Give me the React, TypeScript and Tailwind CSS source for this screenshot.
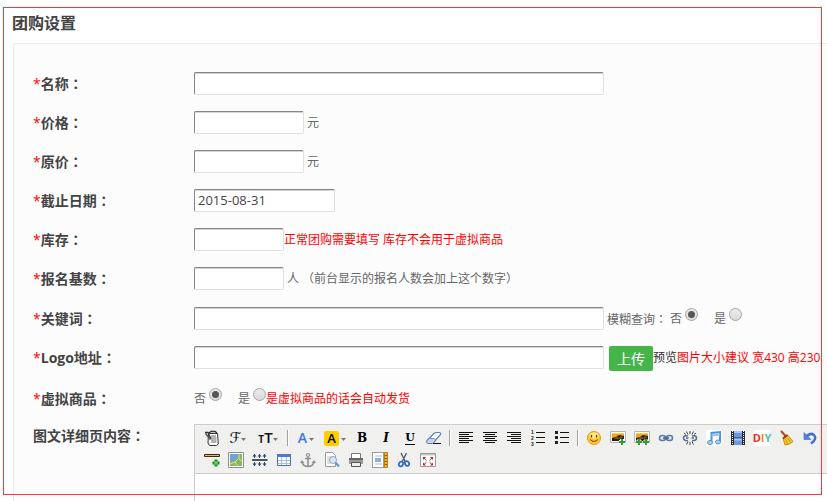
import React, { useState } from "react";

type RowProps = {
    label: string;
    htmlFor?: string;
    required?: boolean;
    className?: string;
    children: React.ReactNode;
};

const INPUT = "h-[23px] shrink-0 rounded-[2px] border border-[#e0e0e0] border-t-[#858585] border-l-[#858585] bg-white px-[3px] text-[13px] text-[#444] inset-shadow-[0_1px_0_#d4d4d4] focus:outline-none";

// the TC face keeps the full-width colon centred in its cell
function Colon() {
    return <span className="font-['Noto_Sans_CJK_TC',sans-serif]">：</span>;
}

function Row({ label, htmlFor, required = true, className = "py-2", children }: RowProps) {
    return (
        <div className={`flex items-start leading-[23px] ${className}`}>
            <label htmlFor={htmlFor} className="h-[23px] w-[161px] shrink-0 text-sm leading-[23px] font-bold text-[#444]">
                {required && <span className="font-normal text-[#f00]">*</span>}
                {label}
                <Colon />
            </label>
            {children}
        </div>
    );
}

function Radio({ text, name, checked, onChange }: { text: string; name: string; checked: boolean; onChange: () => void }) {
    return (
        <label className="flex items-start gap-[3px]">
            {text}
            <input
                type="radio"
                name={name}
                checked={checked}
                onChange={onChange}
                className="mt-px flex size-[13px] shrink-0 appearance-none items-center justify-center rounded-full border border-[#a5a5a5] bg-linear-to-b from-[#ececec] to-[#dadada] checked:before:size-[7px] checked:before:rounded-full checked:before:bg-[#555] checked:before:content-['']"
            />
        </label>
    );
}

function Tool({ title, className = "w-6", children }: { title: string; className?: string; children: React.ReactNode }) {
    return (
        <button type="button" title={title} aria-label={title} className={`flex h-[22px] shrink-0 items-center justify-center ${className}`}>
            {children}
        </button>
    );
}

function Icon({ children }: { children: React.ReactNode }) {
    return (
        <svg viewBox="0 0 16 16" className="size-4" fill="none">
            {children}
        </svg>
    );
}

function Caret() {
    return (
        <svg viewBox="0 0 5 3" className="mt-0.5 h-[3px] w-[5px] shrink-0">
            <path d="M0 0h5L2.5 3z" fill="#777" />
        </svg>
    );
}

function Separator() {
    return <div className="mx-[3px] h-4 w-0.5 shrink-0 self-center border-l border-[#a0a0a0] bg-white" />;
}

function Picture() {
    return (
        <>
            <path d="M.5 1.5h15v11H.5z" fill="#fff" stroke="#b5b5b5" />
            <path d="M2 3h12v8H2z" fill="#2b1c10" />
            <path d="M2 3h12v3L9 5 6 7 2 8z" fill="#f9a11b" />
            <path d="M2 3h12v1H2z" fill="#fcd24a" />
            <path d="M4 9l3-3 2 2 2-2 2 1v1L9 9z" fill="#6b5a1e" />
        </>
    );
}

function Toolbar() {
    return (
        <div className="overflow-hidden border-b border-[#ccc] bg-[#f0f0ee] py-0.5 pl-[5px] text-black">
            <div className="flex">
                <Tool title="快速排版">
                    <Icon>
                        <path d="M4.5 3.5h9l.8 10.5-1.8 1.5h-7L4 13z" fill="#fff" stroke="#333" />
                        <path d="M5 3l2-1.5h4L13 3M1 2.5h3L7 9" stroke="#333" strokeWidth="1.3" />
                        <path d="M1.5 3.5L6.5 9.5" stroke="#555" strokeWidth="1.5" />
                        <path d="M7 6h5M7 8h5.5M7 10h5.5M7 12h5.5" stroke="#666" />
                    </Icon>
                </Tool>
                <Tool title="字体" className="w-7">
                    <span className="font-['DejaVu_Sans',sans-serif] text-[15px] leading-4">ℱ</span>
                    <Caret />
                </Tool>
                <Tool title="字号" className="w-8">
                    <span className="flex items-baseline font-['Open_Sans',sans-serif] leading-4 text-[#111]">
                        <span className="text-[10px] font-bold">T</span>
                        <span className="text-[15px] font-semibold">T</span>
                    </span>
                    <Caret />
                </Tool>
                <Separator />
                <Tool title="字体颜色" className="w-7">
                    <span className="pr-0.5 font-['Open_Sans',sans-serif] text-sm leading-4 font-semibold text-[#3b78e7]">A</span>
                    <Caret />
                </Tool>
                <Tool title="背景颜色" className="w-[30px] gap-0.5">
                    <span className="size-[15px] rounded-[2px] bg-[#fc0] text-center font-['Open_Sans',sans-serif] text-[13px] leading-[15px] font-semibold">A</span>
                    <Caret />
                </Tool>
                <Tool title="加粗">
                    <span className="font-['DejaVu_Serif',serif] text-xs leading-4 font-bold">B</span>
                </Tool>
                <Tool title="斜体">
                    <span className="font-['DejaVu_Serif',serif] text-xs leading-4 font-bold italic">I</span>
                </Tool>
                <Tool title="下划线">
                    <span className="border-b border-black font-['DejaVu_Serif',serif] text-[11px] leading-3 font-bold">U</span>
                </Tool>
                <Tool title="清除格式">
                    <Icon>
                        <path d="M1 10.5L8 3.500q1-1 2.500-1h2.500q2 0 1.500 2L8 12q-1 1.500-2.500 1.500H2.500Q0 13 1 10.500z" fill="#fff" stroke="#5d7db8" strokeWidth="1.200" />
                        <path d="M2 10.500l2.500-2.500h4.500l-2 4-1.500 1H2.500z" fill="#c3d3ee" />
                        <path d="M4 8.500h4.500q1 0 .5 2" stroke="#7a96c8" />
                        <path d="M7 13.500h8" stroke="#111" />
                    </Icon>
                </Tool>
                <Separator />
                <Tool title="左对齐">
                    <Icon>
                        <path d="M1 2.500h14M1 4.500h10M1 6.500h14M1 8.500h10M1 10.500h14M1 12.500h10" stroke="#111" />
                    </Icon>
                </Tool>
                <Tool title="居中">
                    <Icon>
                        <path d="M1 2.500h14M3 4.500h10M1 6.500h14M3 8.500h10M1 10.500h14M3 12.500h10" stroke="#111" />
                    </Icon>
                </Tool>
                <Tool title="右对齐">
                    <Icon>
                        <path d="M1 2.500h14M5 4.500h10M1 6.500h14M5 8.500h10M1 10.500h14M5 12.500h10" stroke="#111" />
                    </Icon>
                </Tool>
                <Tool title="编号">
                    <Icon>
                        <g fill="#222" fontSize="5" fontWeight="700" fontFamily="Liberation Sans, sans-serif">
                            <text x="1" y="4">1</text>
                            <text x="1" y="10">2</text>
                            <text x="1" y="16">3</text>
                        </g>
                        <path d="M6 2.500h9M6 7.500h9M6 12.500h9" stroke="#111" />
                    </Icon>
                </Tool>
                <Tool title="项目符号">
                    <Icon>
                        <path d="M1 1h3v3H1zM1 6h3v3H1zM1 11h3v3H1z" fill="#222" />
                        <path d="M6 2.500h9M6 7.500h9M6 12.500h9" stroke="#111" />
                    </Icon>
                </Tool>
                <Separator />
                <Tool title="表情">
                    <Icon>
                        <circle cx="8" cy="8" r="6.500" fill="#ffc928" stroke="#e09a1c" />
                        <ellipse cx="8" cy="5.500" rx="4.500" ry="3" fill="#ffe987" />
                        <path d="M5.500 5v2.500M10.500 5v2.500" stroke="#5b3a00" strokeWidth="1.300" />
                        <path d="M4 9.500q4 4 8 0" stroke="#6b4300" />
                    </Icon>
                </Tool>
                <Tool title="图片">
                    <Icon>
                        <Picture />
                        <path d="M12 9v6M9 12h6" stroke="#fff" strokeWidth="4" />
                        <path d="M12 9v6M9 12h6" stroke="#2f9e2f" strokeWidth="2" />
                    </Icon>
                </Tool>
                <Tool title="多图上传">
                    <Icon>
                        <Picture />
                        <path d="M5 9v6M2 12h6M12 9v6M9 12h6" stroke="#fff" strokeWidth="3" />
                        <path d="M5 9v6M2 12h6M12 9v6M9 12h6" stroke="#2f9e2f" strokeWidth="2" />
                    </Icon>
                </Tool>
                <Tool title="超链接">
                    <Icon>
                        <rect x="1.500" y="5.500" width="6" height="5" rx="2.500" fill="#dfe7f3" stroke="#5c7ba8" strokeWidth="1.500" />
                        <rect x="8.500" y="5.500" width="6" height="5" rx="2.500" fill="#dfe7f3" stroke="#5c7ba8" strokeWidth="1.500" />
                        <path d="M5 8h6" stroke="#3f5f8e" strokeWidth="1.500" />
                    </Icon>
                </Tool>
                <Tool title="取消超链接">
                    <Icon>
                        <path d="M6 6q-4.500-1-4.500 2T6 10.500M4 8h2.500M10 6q4.500-1 4.500 2T10 10.500M12 8H9.500" stroke="#54709a" strokeWidth="1.600" />
                        <path d="M8 1v3M4.500 1.500l1.500 3M11.500 1.500l-1.500 3M2 3l2 1.500M14 3l-2 1.500M8 15v-3M4.500 14.500l1.500-3M11.500 14.500l-1.500-3" stroke="#333" strokeWidth=".9" />
                    </Icon>
                </Tool>
                <Tool title="音乐">
                    <Icon>
                        <path d="M0 0h16v16H0z" fill="#fff" />
                        <path d="M5.500 12V3l8.500-1v9.500" stroke="#4b93d6" strokeWidth="2" />
                        <path d="M5.500 5.500L14 4.500" stroke="#8fc0ee" strokeWidth="2" />
                        <ellipse cx="4" cy="12.500" rx="2.500" ry="2" fill="#a9d2f5" stroke="#4b93d6" />
                        <ellipse cx="12" cy="12" rx="2.500" ry="2" fill="#a9d2f5" stroke="#4b93d6" />
                    </Icon>
                </Tool>
                <Tool title="视频">
                    <Icon>
                        <path d="M1 1h14v14H1z" fill="#222a3c" />
                        <path d="M4 1h8v6.500H4zM4 8.500h8V15H4z" fill="#6f97e0" />
                        <path d="M4 1h8v2H4zM4 8.500h8v2H4z" fill="#a9c4f3" />
                        <path d="M2.500 1v14M13.500 1v14" stroke="#fff" strokeDasharray="1 1" />
                    </Icon>
                </Tool>
                <Tool title="DIY">
                    <span className="flex h-4 w-4 items-center justify-center bg-white font-['Open_Sans',sans-serif] text-[11px] leading-4 font-bold">
                        <span className="text-[#d8352a]">D</span>
                        <span className="text-[#ef8a22]">I</span>
                        <span className="text-[#4fc3b5]">Y</span>
                    </span>
                </Tool>
                <Tool title="清理文档">
                    <Icon>
                        <path d="M3 1l5 5.500" stroke="#a8501c" strokeWidth="2" />
                        <path d="M5 8l4.500-3 5.500 6.500q-2.500 3-8 3.500z" fill="#f4cb2e" stroke="#c9920e" />
                        <path d="M5 8.500l4.500-3.500" stroke="#b3281e" strokeWidth="1.800" />
                        <path d="M7.500 9l2 5M9.500 8l3 4.500" stroke="#c9920e" />
                    </Icon>
                </Tool>
                <Tool title="撤销">
                    <Icon>
                        <path d="M4 7q4-5 8-2 3.500 4-3 8.500" stroke="#3d6fd0" strokeWidth="2.400" />
                        <path d="M2 2.500v7h7z" fill="#4f82e2" stroke="#2f5fbf" strokeWidth=".5" />
                    </Icon>
                </Tool>
            </div>
            <div className="flex">
                <Tool title="插入横线">
                    <Icon>
                        <path d="M.5 2.500h15v2H.5z" fill="#e7b663" stroke="#3d2a10" />
                        <path d="M12 7.500v7M8.500 11h7" stroke="#15901a" strokeWidth="3" />
                        <path d="M12 9v4M10 11h4" stroke="#8fe07e" />
                    </Icon>
                </Tool>
                <Tool title="地图">
                    <Icon>
                        <path d="M.5.500h15v15H.5z" fill="#fff" stroke="#8d8d8d" />
                        <path d="M2 2h12v12H2z" fill="#86b85a" />
                        <path d="M2 2h9L9 7l-3 2-4-1z" fill="#6ba4dd" />
                        <path d="M11 2v5l3 2M2 12l5-2 3-3M7 10l3 4" stroke="#dfe3a0" />
                    </Icon>
                </Tool>
                <Tool title="分页符">
                    <Icon>
                        <path d="M0 8h15.500" stroke="#555" strokeWidth="2" />
                        <path d="M2.500 2v4M7.500 2v4M12.500 2v4M2.500 10v4M7.500 10v4M12.500 10v4" stroke="#24456f" />
                        <path d="M.5 4.500l2-2.500 2 2.500zM5.500 4.500l2-2.500 2 2.500zM10.500 4.500l2-2.500 2 2.500zM.5 11.500l2 2.500 2-2.500zM5.500 11.500l2 2.500 2-2.500zM10.500 11.500l2 2.500 2-2.500z" fill="#24456f" />
                    </Icon>
                </Tool>
                <Tool title="表格">
                    <Icon>
                        <path d="M1.500 2.500h13v11h-13z" fill="#fff" stroke="#4a70b8" />
                        <path d="M1 2h14v3H1z" fill="#4c79cf" />
                        <path d="M2 8.500h12M2 11.500h12M5.500 5v8M10.500 5v8" stroke="#a5bfe8" />
                    </Icon>
                </Tool>
                <Tool title="锚点">
                    <Icon>
                        <circle cx="8" cy="3" r="1.500" stroke="#8a8f94" strokeWidth="1.200" />
                        <path d="M8 5v9M5 6.500h6M2 10q1 4.500 6 4.500t6-4.500" stroke="#8a8f94" strokeWidth="1.600" />
                        <path d="M0 11l2-3 2.500 3zM11.500 11L14 8l2 3z" fill="#8a8f94" />
                    </Icon>
                </Tool>
                <Tool title="预览">
                    <Icon>
                        <path d="M1.500.500h7l3 3v11h-10z" fill="#fff" stroke="#9a9a9a" />
                        <path d="M3 5h6M3 7h4M3 9h3M3 11h4" stroke="#c0c0c0" />
                        <circle cx="9" cy="8" r="3.500" fill="#d5e7f8" stroke="#8ba7c6" />
                        <path d="M11.500 10.500l3.500 4" stroke="#6d92d0" strokeWidth="2" />
                    </Icon>
                </Tool>
                <Tool title="打印">
                    <Icon>
                        <path d="M3.500 1.500h9v5h-9z" fill="#fff" stroke="#777" />
                        <path d="M1 6h14v6H1z" fill="#9b9b9b" />
                        <path d="M1 6h14v2H1z" fill="#666" />
                        <path d="M3.500 10.500h9v4h-9z" fill="#eee" stroke="#555" />
                    </Icon>
                </Tool>
                <Tool title="模板">
                    <Icon>
                        <path d="M.5.500h11v15H.5z" fill="#fff" stroke="#444" strokeDasharray="1 1" />
                        <path d="M3 4h7M3 12h7" stroke="#b9b9b9" />
                        <path d="M3 6h6v4H3z" fill="#8cb1dd" />
                        <path d="M12.500.500h3v15h-3z" fill="#f0b440" stroke="#c07d12" />
                        <path d="M13 3.500h2M13 6.500h2M13 9.500h2M13 12.500h2" stroke="#8c5a08" />
                    </Icon>
                </Tool>
                <Tool title="剪切">
                    <Icon>
                        <path d="M5 1l4.500 9M10.500 1L6 10" stroke="#5a6370" strokeWidth="1.500" />
                        <ellipse cx="5" cy="12" rx="2" ry="2.500" stroke="#2f68cc" strokeWidth="1.700" transform="rotate(30 5 12)" />
                        <ellipse cx="11" cy="11.500" rx="2" ry="2.500" stroke="#2f68cc" strokeWidth="1.700" transform="rotate(-30 11 11.500)" />
                    </Icon>
                </Tool>
                <Tool title="全屏">
                    <Icon>
                        <path d="M.5 1.500h15v13H.5z" fill="#fff" stroke="#999" />
                        <path d="M1 2h14v1.500H1z" fill="#c8c8c8" />
                        <path d="M3 5h3L3 8zM13 5h-3L13 8zM3 13.500h3L3 10.500zM13 13.500h-3L13 10.500z" fill="#d02020" />
                        <path d="M4 6l2.500 2.300M12 6L9.500 8.300M4 12.500l2.500-2.300M12 12.500l-2.500-2.300" stroke="#d02020" />
                    </Icon>
                </Tool>
            </div>
        </div>
    );
}

export default function GroupBuySettings() {
    const [fuzzy, setFuzzy] = useState(false);
    const [virtual, setVirtual] = useState(false);
    const [endDate, setEndDate] = useState("2015-08-31");

    return (
        <div className="relative flex h-screen flex-col overflow-hidden bg-white pl-3 font-['Open_Sans','Noto_Sans_CJK_SC',sans-serif] text-xs text-[#666]">
            <h1 className="pt-[11px] pb-2 text-base leading-6 font-bold text-[#444]">团购设置</h1>

            <form className="ml-px flex flex-1 flex-col border-t border-l border-[#ebebeb] bg-[#fcfcfc] pt-5 pl-[19px] whitespace-nowrap">
                <Row label="名称" htmlFor="name">
                    <input id="name" type="text" className={`${INPUT} w-[410px]`} />
                </Row>
                <Row label="价格" htmlFor="price">
                    <input id="price" type="text" className={`${INPUT} w-[110px]`} />
                    <span className="ml-[3px]">元</span>
                </Row>
                <Row label="原价" htmlFor="original">
                    <input id="original" type="text" className={`${INPUT} w-[110px]`} />
                    <span className="ml-[3px]">元</span>
                </Row>
                <Row label="截止日期" htmlFor="deadline">
                    <input id="deadline" type="text" value={endDate} onChange={(e) => setEndDate(e.target.value)} className={`${INPUT} w-[141px]`} />
                </Row>
                <Row label="库存" htmlFor="stock">
                    <input id="stock" type="text" className={`${INPUT} w-[90px]`} />
                    <span className="text-[#f00]">正常团购需要填写 库存不会用于虚拟商品</span>
                </Row>
                <Row label="报名基数" htmlFor="base">
                    <input id="base" type="text" className={`${INPUT} w-[90px]`} />
                    <span className="ml-[3px]">人 （前台显示的报名人数会加上这个数字）</span>
                </Row>
                <Row label="关键词" htmlFor="keyword" className="pt-[9px] pb-2">
                    <input id="keyword" type="text" className={`${INPUT} w-[410px]`} />
                    <div className="ml-[3px] flex h-[23px] items-start">
                        <span className="mr-[3px]">模糊查询<Colon /></span>
                        <div className="flex gap-4">
                            <Radio text="否" name="fuzzy" checked={!fuzzy} onChange={() => setFuzzy(false)} />
                            <Radio text="是" name="fuzzy" checked={fuzzy} onChange={() => setFuzzy(true)} />
                        </div>
                    </div>
                </Row>
                <Row label="Logo地址" htmlFor="logo">
                    <input id="logo" type="text" className={`${INPUT} w-[410px]`} />
                    <button type="button" className="ml-[5px] h-[25px] w-11 shrink-0 rounded-[2px] bg-[#44b549] text-sm text-white">上传</button>
                    <span className="text-[#333]">预览</span>
                    <span className="text-[#f00]">图片大小建议 宽430 高230</span>
                </Row>
                <Row label="虚拟商品">
                    <div className="flex h-[23px] items-start">
                        <div className="flex gap-4">
                            <Radio text="否" name="virtual" checked={!virtual} onChange={() => setVirtual(false)} />
                            <Radio text="是" name="virtual" checked={virtual} onChange={() => setVirtual(true)} />
                        </div>
                        <span className="text-[#f00]">是虚拟商品的话会自动发货</span>
                    </div>
                </Row>
                <Row label="图文详细页内容" htmlFor="detail" required={false} className="flex-1 pt-1.5">
                    <div className="flex min-w-0 flex-1 flex-col self-stretch border-t border-l border-[#ccc] bg-white">
                        <Toolbar />
                        <textarea id="detail" className="min-h-0 w-full flex-1 resize-none bg-white focus:outline-none" />
                    </div>
                </Row>
            </form>

            <div className="pointer-events-none absolute top-[7px] right-[5px] bottom-1.5 left-[3px] border border-[#f03c3c]" />
        </div>
    );
}
